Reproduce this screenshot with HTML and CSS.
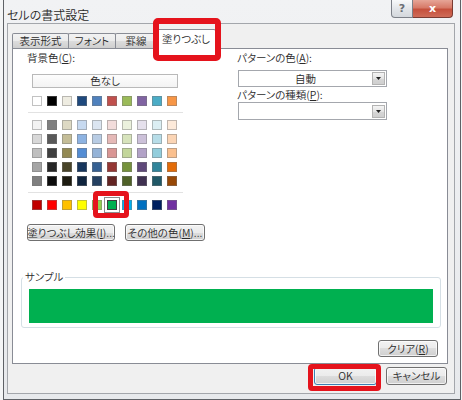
FILE: index.html
```html
<!DOCTYPE html>
<html lang="ja">
<head>
<meta charset="utf-8">
<title>セルの書式設定</title>
<link rel="stylesheet" href="styles.css">
</head>
<body>
<div class="window">
  <div class="titlebar">
    <span class="title">セルの書式設定</span>
    <div class="caption-btns">
      <span class="cbtn help">?</span>
      <span class="cbtn close">x</span>
    </div>
  </div>
  <div class="dialog">
    <div class="tabs">
      <div class="tab t1">表示形式</div>
      <div class="tab t2">フォント</div>
      <div class="tab t3">罫線</div>
      <div class="tab active">塗りつぶし<span class="hl hl-tab"></span></div>
    </div>
    <div class="panel">
      <div class="top">
        <div class="left">
          <div class="label">背景色(<u>C</u>):</div>
          <div class="nocolor">色なし</div>
          <div class="swatches row1">
            <span class="sw" style="background:#ffffff"></span>
            <span class="sw" style="background:#000000"></span>
            <span class="sw" style="background:#eeece1"></span>
            <span class="sw" style="background:#1f497d"></span>
            <span class="sw" style="background:#4f81bd"></span>
            <span class="sw" style="background:#c0504d"></span>
            <span class="sw" style="background:#9bbb59"></span>
            <span class="sw" style="background:#8064a2"></span>
            <span class="sw" style="background:#4bacc6"></span>
            <span class="sw" style="background:#f79646"></span>
          </div>
          <div class="sep"></div>
          <div class="swatches shades">
            <span class="sw" style="background:#f2f2f2"></span>
            <span class="sw" style="background:#7f7f7f"></span>
            <span class="sw" style="background:#ddd9c3"></span>
            <span class="sw" style="background:#c6d9f0"></span>
            <span class="sw" style="background:#dbe5f1"></span>
            <span class="sw" style="background:#f2dcdb"></span>
            <span class="sw" style="background:#ebf1dd"></span>
            <span class="sw" style="background:#e5e0ec"></span>
            <span class="sw" style="background:#dbeef3"></span>
            <span class="sw" style="background:#fdeada"></span>

            <span class="sw" style="background:#d8d8d8"></span>
            <span class="sw" style="background:#595959"></span>
            <span class="sw" style="background:#c4bd97"></span>
            <span class="sw" style="background:#8db3e2"></span>
            <span class="sw" style="background:#b8cce4"></span>
            <span class="sw" style="background:#e5b9b7"></span>
            <span class="sw" style="background:#d7e3bc"></span>
            <span class="sw" style="background:#ccc1d9"></span>
            <span class="sw" style="background:#b7dde8"></span>
            <span class="sw" style="background:#fbd5b5"></span>

            <span class="sw" style="background:#bfbfbf"></span>
            <span class="sw" style="background:#3f3f3f"></span>
            <span class="sw" style="background:#938953"></span>
            <span class="sw" style="background:#548dd4"></span>
            <span class="sw" style="background:#95b3d7"></span>
            <span class="sw" style="background:#d99694"></span>
            <span class="sw" style="background:#c3d69b"></span>
            <span class="sw" style="background:#b2a2c7"></span>
            <span class="sw" style="background:#92cddc"></span>
            <span class="sw" style="background:#fac08f"></span>

            <span class="sw" style="background:#a5a5a5"></span>
            <span class="sw" style="background:#262626"></span>
            <span class="sw" style="background:#494429"></span>
            <span class="sw" style="background:#17365d"></span>
            <span class="sw" style="background:#366092"></span>
            <span class="sw" style="background:#953734"></span>
            <span class="sw" style="background:#76923c"></span>
            <span class="sw" style="background:#5f497a"></span>
            <span class="sw" style="background:#31859b"></span>
            <span class="sw" style="background:#e36c09"></span>

            <span class="sw" style="background:#7f7f7f"></span>
            <span class="sw" style="background:#0c0c0c"></span>
            <span class="sw" style="background:#1d1b10"></span>
            <span class="sw" style="background:#0f243e"></span>
            <span class="sw" style="background:#244061"></span>
            <span class="sw" style="background:#632423"></span>
            <span class="sw" style="background:#4f6128"></span>
            <span class="sw" style="background:#3f3151"></span>
            <span class="sw" style="background:#205867"></span>
            <span class="sw" style="background:#974806"></span>
          </div>
          <div class="sep"></div>
          <div class="swatches std">
            <span class="sw" style="background:#c00000"></span>
            <span class="sw" style="background:#ff0000"></span>
            <span class="sw" style="background:#ffc000"></span>
            <span class="sw" style="background:#ffff00"></span>
            <span class="sw" style="background:#92d050"></span>
            <span class="sw sel" style="background:#00b050"><span class="hl hl-sw"></span></span>
            <span class="sw" style="background:#00b0f0"></span>
            <span class="sw" style="background:#0070c0"></span>
            <span class="sw" style="background:#002060"></span>
            <span class="sw" style="background:#7030a0"></span>
          </div>
          <div class="btnrow">
            <div class="btn effect">塗りつぶし効果(<u>I</u>)...</div>
            <div class="btn more">その他の色(<u>M</u>)...</div>
          </div>
        </div>
        <div class="right">
          <div class="label">パターンの色(<u>A</u>):</div>
          <div class="combo c1"><span class="combo-text">自動</span><span class="arrow"><svg width="5" height="3" viewBox="0 0 5 3"><path d="M0 0H5L2.5 3Z" fill="#222"/></svg></span></div>
          <div class="label l2">パターンの種類(<u>P</u>):</div>
          <div class="combo c2"><span class="combo-text"></span><span class="arrow"><svg width="5" height="3" viewBox="0 0 5 3"><path d="M0 0H5L2.5 3Z" fill="#222"/></svg></span></div>
        </div>
      </div>
      <fieldset class="sample">
        <legend>サンプル</legend>
        <div class="fill"></div>
      </fieldset>
      <div class="clear-row">
        <div class="btn clear">クリア(<u>R</u>)</div>
      </div>
    </div>
    <div class="footer">
      <div class="btn ok">OK<span class="hl hl-ok"></span></div>
      <div class="btn cancel">キャンセル</div>
    </div>
  </div>
</div>
</body>
</html>
```

FILE: styles.css
```css
* { box-sizing: border-box; }
html, body { margin: 0; padding: 0; }
body {
  width: 462px;
  height: 400px;
  overflow: hidden;
  background: #f4f5f6;
  font-family: "Noto Sans CJK JP", "Noto Sans", sans-serif;
  font-size: 10.5px;
  font-weight: 350;
  line-height: 12px;
  color: #2a2a2a;
  font-feature-settings: "palt" 1;
}
u { text-decoration: underline; text-underline-offset: 1px; }

.window {
  margin-left: 3px;
  width: 458px;
  height: 400px;
  border: 1px solid #5e6166;
  border-top: none;
  background: linear-gradient(#f1f2f4, #e7e9ec);
  display: flex;
  flex-direction: column;
  padding: 0 5px 5px 3px;
}

.titlebar {
  height: 23px;
  display: flex;
  justify-content: space-between;
  align-items: flex-start;
  flex: none;
}
.title {
  font-size: 12px;
  line-height: 14px;
  padding-top: 8px;
  color: #2a2a2a;
}
.caption-btns { display: flex; margin-right: 2px; }
.cbtn {
  height: 18px;
  display: flex;
  align-items: center;
  justify-content: center;
  font-family: "DejaVu Sans", sans-serif;
  font-weight: bold;
}
.help {
  width: 22px;
  border: 1px solid #7c8088;
  border-top: none;
  border-radius: 0 0 0 4px;
  background: linear-gradient(#f8f9fa, #e1e4e8 55%, #d4d8dd);
  color: #6a6e75;
  font-size: 11px;
}
.close {
  width: 40px;
  border: 1px solid #7a3b32;
  border-top: none;
  border-left: none;
  border-radius: 0 0 4px 0;
  background: linear-gradient(#e6a597 0%, #d77a68 45%, #c5503c 55%, #cf6b58 100%);
  color: #fff;
  font-size: 11px;
}

.dialog {
  flex: 1;
  background: #f0f0f0;
  border: 1px solid #a3a6ab;
  padding: 0 6px 0 4px;
  display: flex;
  flex-direction: column;
}

.tabs {
  height: 25px;
  margin-bottom: -1px;
  display: flex;
  align-items: flex-end;
  position: relative;
  z-index: 2;
  flex: none;
}
.tab {
  height: 15px;
  margin-bottom: 1px;
  border: 1px solid #898c95;
  border-bottom: none;
  border-radius: 2px 2px 0 0;
  background: linear-gradient(#f2f2f2, #ebebeb 50%, #dddddd 50%, #cfcfcf);
  display: flex;
  align-items: center;
  justify-content: center;
  white-space: nowrap;
}
.t1 { width: 57px; }
.t2 { width: 48px; margin-left: -1px; }
.t3 { width: 42px; margin-left: -1px; }
.tab.active {
  width: 60px;
  height: 20px;
  margin-left: -1px;
  margin-bottom: 0;
  background: #fff;
  position: relative;
  padding-bottom: 2px;
}

.hl {
  position: absolute;
  border: 5px solid #e5131c;
  border-radius: 4px;
  pointer-events: none;
}
.hl-tab { left: -4px; right: -6px; top: -12px; bottom: -12px; border-width: 6px; border-radius: 5px; }

.panel {
  height: 316px;
  flex: none;
  background: #fff;
  border: 1px solid #898c95;
}

.top {
  display: flex;
  padding: 3px 0 0 14px;
}
.left { width: 210px; }
.label { height: 12px; white-space: nowrap; }

.nocolor {
  margin: 10px 0 0 5px;
  width: 146px;
  height: 14px;
  border: 1px solid #b9b9b9;
  background: linear-gradient(#fdfdfd, #f3f3f3);
  display: flex;
  align-items: center;
  justify-content: center;
}

.swatches {
  display: grid;
  grid-template-columns: repeat(10, 10px);
  column-gap: 5px;
  row-gap: 4px;
  margin-left: 5px;
}
.sw {
  width: 10px;
  height: 10px;
  border: 1px solid rgba(120, 120, 120, 0.45);
}
.row1 { margin-top: 8px; }
.sep {
  margin: 6px 0 0 1px;
  width: 155px;
  height: 1px;
  background: #e2e2e2;
}
.shades { margin-top: 7px; }
.std { margin-top: 7px; }
.sw.sel {
  position: relative;
  border: 1px solid #3d3d3d;
  box-shadow: 0 0 0 2px #ffffff, 0 0 0 3px #8d8d8d;
}
.hl-sw { left: -15px; right: -13px; top: -10px; bottom: -9px; }

.btnrow {
  margin-top: 14px;
  display: flex;
  gap: 10px;
}
.btn {
  height: 17px;
  border: 1px solid #707070;
  border-radius: 3px;
  background: linear-gradient(#f2f2f2, #ebebeb 50%, #dddddd 50%, #cfcfcf);
  box-shadow: inset 0 0 0 1px rgba(255, 255, 255, 0.7);
  display: flex;
  align-items: center;
  justify-content: center;
  white-space: nowrap;
}
.effect { width: 88px; }
.more { width: 80px; }

.right { width: 160px; }
.combo {
  margin-top: 6px;
  margin-left: 1px;
  width: 149px;
  height: 17px;
  border: 1px solid #a4a7ad;
  background: #fff;
  display: flex;
  align-items: center;
}
.combo-text { flex: 1; text-align: center; }
.arrow {
  width: 13px;
  height: 13px;
  margin-right: 1px;
  border: 1px solid #b3b3b3;
  background: linear-gradient(#f4f4f4, #e4e4e4 50%, #d6d6d6 50%, #cfcfcf);
  display: flex;
  align-items: center;
  justify-content: center;
}
.label.l2 { margin-top: 2px; }
.combo.c2 { margin-top: 1px; height: 18px; }

.sample {
  margin: 30px 0 0 8px;
  width: 420px;
  padding: 6px 7px 4px 7px;
  border: 1px solid #d5dfe5;
  border-radius: 3px;
  min-width: 0;
}
.sample legend {
  padding: 0 2px;
  margin-left: -6px;
  line-height: 12px;
  height: 12px;
}
.fill {
  height: 34px;
  background: #00b050;
}

.clear-row {
  margin-top: 12px;
  display: flex;
  justify-content: flex-end;
  padding-right: 9px;
}
.clear { width: 60px; }

.footer {
  margin-top: 3px;
  display: flex;
  justify-content: flex-end;
  gap: 9px;
  padding-right: 1px;
}
.ok {
  width: 63px;
  height: 18px;
  border-color: #3c7fb1;
  position: relative;
}
.cancel { width: 61px; height: 18px; }
.hl-ok { left: -7px; right: -5px; top: -4px; bottom: -7px; }
```
